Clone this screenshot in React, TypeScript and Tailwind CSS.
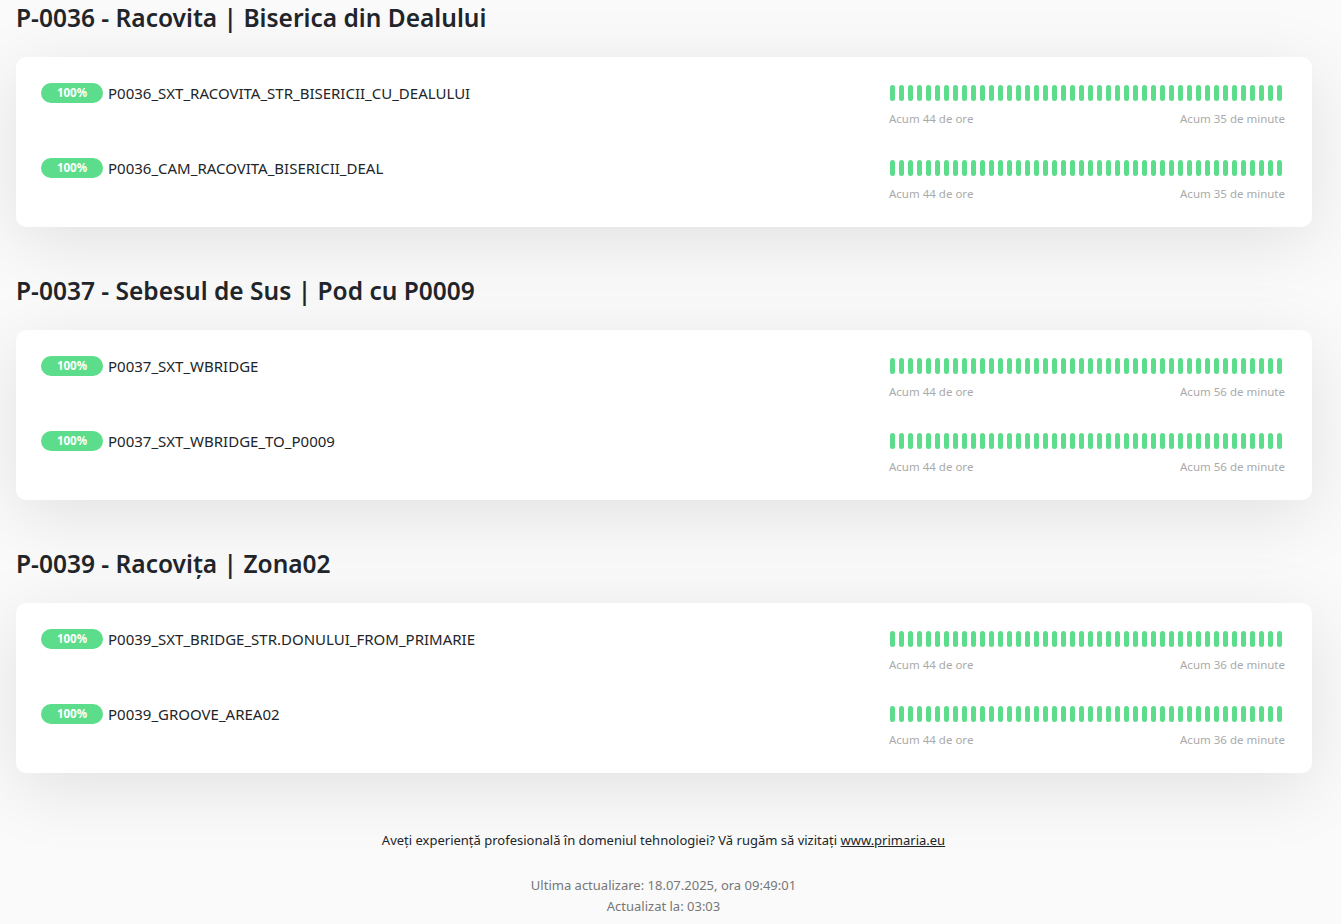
const groups = [
  {
    title: 'P-0036 - Racovita | Biserica din Dealului',
    monitors: [
      { name: 'P0036_SXT_RACOVITA_STR_BISERICII_CU_DEALULUI', last: 'Acum 35 de minute' },
      { name: 'P0036_CAM_RACOVITA_BISERICII_DEAL', last: 'Acum 35 de minute' },
    ],
  },
  {
    title: 'P-0037 - Sebesul de Sus | Pod cu P0009',
    monitors: [
      { name: 'P0037_SXT_WBRIDGE', last: 'Acum 56 de minute' },
      { name: 'P0037_SXT_WBRIDGE_TO_P0009', last: 'Acum 56 de minute' },
    ],
  },
  {
    title: 'P-0039 - Racovița | Zona02',
    monitors: [
      { name: 'P0039_SXT_BRIDGE_STR.DONULUI_FROM_PRIMARIE', last: 'Acum 36 de minute' },
      { name: 'P0039_GROOVE_AREA02', last: 'Acum 36 de minute' },
    ],
  },
];

const beats = Array.from({ length: 44 }, (_, i) => i);

const HeartbeatBar = ({ last }: { last: string }) => (
  <div className="w-[397px] shrink-0">
    <div className="flex gap-[4px] pl-[2px] pt-[2px]">
      {beats.map((b) => (
        <div key={b} className="w-[5px] h-[16px] rounded-full bg-[#5cdd8b]" />
      ))}
    </div>
    <div className="flex justify-between mt-[10px] pl-[1px] text-[11.5px] leading-[16px] text-[#aaaaaa]">
      <span>Acum 44 de ore</span>
      <span>{last}</span>
    </div>
  </div>
);

export default function App() {
  return (
    <div
      className="min-h-screen bg-[#fafafa] text-[#212529]"
      style={{ fontFamily: '"Noto Sans", "Open Sans", sans-serif' }}
    >
      <div className="px-[16px] pt-[3px]">
        {groups.map((g) => (
          <section key={g.title} className="mb-[49px]">
            <h2 className="text-[24.5px] leading-[30px] font-semibold mb-[24px]">{g.title}</h2>
            <div className="w-[1296px] bg-white rounded-[10px] shadow-[0_15px_70px_rgba(0,0,0,0.1)] pl-[25px] pr-[27px] pt-[26px] pb-[25px] flex flex-col gap-[31px]">
              {g.monitors.map((m) => (
                <div key={m.name} className="flex justify-between">
                  <div className="flex items-start gap-[5px]">
                    <span className="w-[62px] h-[20px] rounded-full bg-[#5cdd8b] text-white text-[11.5px] font-bold flex items-center justify-center">
                      100%
                    </span>
                    <span className="text-[15px] leading-[20px]">{m.name}</span>
                  </div>
                  <HeartbeatBar last={m.last} />
                </div>
              ))}
            </div>
          </section>
        ))}
      </div>
      <footer className="text-center pt-[8px] pb-[6px] pr-[14px]">
        <p className="text-[13px] leading-[20px] text-[#212529]">
          Aveți experiență profesională în domeniul tehnologiei? Vă rugăm să vizitați{' '}
          <a className="underline">www.primaria.eu</a>
        </p>
        <div className="mt-[25px] text-[13px] leading-[21px] text-[#777777]">
          <div>Ultima actualizare: 18.07.2025, ora 09:49:01</div>
          <div>Actualizat la: 03:03</div>
        </div>
      </footer>
    </div>
  );
}
